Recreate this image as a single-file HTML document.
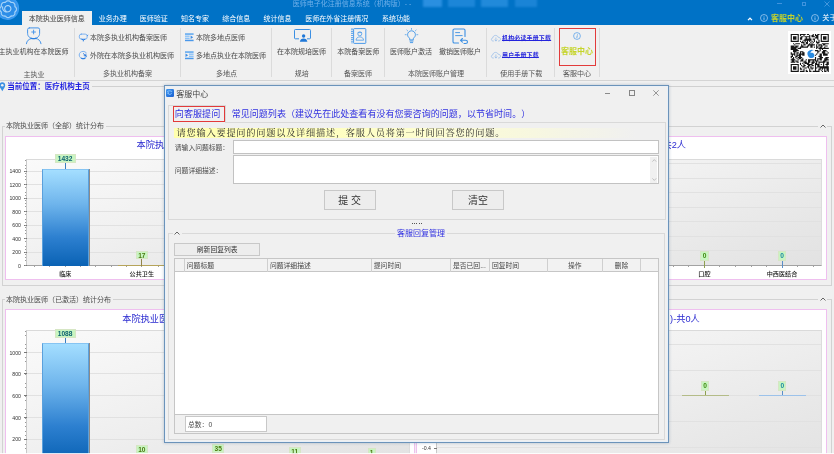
<!DOCTYPE html>
<html lang="zh-CN">
<head>
<meta charset="utf-8">
<title>医师电子化注册信息系统（机构版）</title>
<style>
html,body{margin:0;padding:0}
body{width:834px;height:454px;overflow:hidden;background:#f0f0f0;position:relative;will-change:transform;
 font-family:"Liberation Sans","Noto Sans CJK SC",sans-serif;font-size:7px;color:#4a4a4a}
.a{position:absolute}
.t{position:absolute;white-space:nowrap;line-height:10px;height:10px}
.c{text-align:center}
svg{position:absolute;overflow:visible}
/* header */
#hdr{left:0;top:0;width:834px;height:24.5px;background:#0072c6}
.tab{color:#fff;font-size:7px}
#atab{left:22px;top:10.8px;width:69.7px;height:14px;background:#f0f0f0}
.sep{position:absolute;width:1px;background:#dbdbdb;top:28px;height:48.5px}
.gl{color:#555}
.lnk{color:#2424dc;font-weight:bold;text-decoration:underline;font-size:5.9px;letter-spacing:0.25px;text-underline-offset:0.4px;text-decoration-thickness:0.7px}

.grp{position:absolute;border:1px solid #d2d2d2;box-sizing:border-box}
.gh{position:absolute;background:#f0f0f0;white-space:nowrap;line-height:10px;height:10px;padding:0 1.5px;color:#4a4a4a}
.ch{position:absolute;background:#fff;border:1px solid #efbfef;box-sizing:border-box}
.plot{position:absolute;box-sizing:border-box;border-top:1px solid #dadada;border-left:1px solid #c8c8c8;border-right:1px solid #dcdcdc;border-bottom:1px solid #a2a2a2;background:linear-gradient(160deg,#fafafa 0%,#f1f1f1 40%,#e8e8e8 75%,#e2e2e2 100%)}
.grid{position:absolute;left:0;right:0;height:1px;background:#e1e1e1}
.yl{position:absolute;font-size:5.2px;line-height:6px;height:6px;width:18px;text-align:right;color:#333;font-family:"Liberation Sans",sans-serif}
.xl{position:absolute;font-size:6.1px;line-height:8px;height:8px;width:50px;text-align:center;color:#111;font-weight:500}
.ctitle{position:absolute;white-space:nowrap;font-size:9.2px;line-height:12px;height:12px;color:#2a2ad0}
.dl{position:absolute;box-sizing:border-box;background:#c8f5c1;border:0.7px solid #d6e6c4;font-size:6.6px;line-height:7.4px;text-align:center;font-weight:bold;font-family:"Liberation Sans",sans-serif}
.tick{position:absolute;width:0.8px;height:1.3px;background:#a0a0a0}

#dlg{left:164px;top:84.8px;width:505px;height:358.7px;background:#f0f0f0;border:1px solid #6b93ba;box-sizing:border-box;box-shadow:0 0 3px rgba(40,80,130,.30),inset 0 0 0 1px #e9f0f7}
.pn{position:absolute;border:1px solid #d9d9d9;box-sizing:border-box}
.inp{position:absolute;background:#fff;border:1px solid #c2c2c2;box-sizing:border-box}
.btn{position:absolute;background:#ededed;border:1px solid #c8c8c8;box-sizing:border-box;text-align:center;color:#333;white-space:nowrap}
.th{position:absolute;top:0;height:12.8px;line-height:13.4px;border-left:1px solid #cfcfcf;box-sizing:border-box;padding-left:2px;white-space:nowrap;overflow:hidden;color:#444;font-size:6.8px}
.kai{text-spacing-trim:space-all;font-family:"Liberation Serif","Noto Serif CJK SC",serif}
</style>
</head>
<body>
<!--HEADER-->
<div class="a" id="hdr"></div>
<!-- logo -->
<svg style="left:0;top:0" width="22" height="22" viewBox="0 0 22 22">
 <defs><radialGradient id="lg" cx="50%" cy="50%" r="50%"><stop offset="0" stop-color="#2686e2"/><stop offset="0.75" stop-color="#2f91ea"/><stop offset="1" stop-color="#3d9df2"/></radialGradient></defs>
 <circle cx="7.5" cy="8.3" r="11.6" fill="url(#lg)"/>
 <path d="M16.50 9.20 L16.41 9.93 L16.15 10.62 L15.72 11.24 L15.08 11.74 L14.83 12.34 L14.93 13.14 L14.80 13.89 L14.49 14.56 L14.04 15.14 L13.46 15.59 L12.79 15.90 L12.04 16.03 L11.24 15.93 L10.64 16.18 L10.14 16.82 L9.52 17.25 L8.83 17.51 L8.10 17.60 L7.37 17.51 L6.68 17.25 L6.06 16.82 L5.56 16.18 L4.96 15.93 L4.16 16.03 L3.41 15.90 L2.74 15.59 L2.16 15.14 L1.71 14.56 L1.40 13.89 L1.27 13.14 L1.37 12.34 L1.12 11.74 L0.48 11.24 L0.05 10.62 L-0.21 9.93 L-0.30 9.20 L-0.21 8.47 L0.05 7.78 L0.48 7.16 L1.12 6.66 L1.37 6.06 L1.27 5.26 L1.40 4.51 L1.71 3.84 L2.16 3.26 L2.74 2.81 L3.41 2.50 L4.16 2.37 L4.96 2.47 L5.56 2.22 L6.06 1.58 L6.68 1.15 L7.37 0.89 L8.10 0.80 L8.83 0.89 L9.52 1.15 L10.14 1.58 L10.64 2.22 L11.24 2.47 L12.04 2.37 L12.79 2.50 L13.46 2.81 L14.04 3.26 L14.49 3.84 L14.80 4.51 L14.93 5.26 L14.83 6.06 L15.08 6.66 L15.72 7.16 L16.15 7.78 L16.41 8.47 L16.50 9.20Z" fill="none" stroke="#a4d2f8" stroke-width="1.2" stroke-linejoin="round"/>
 <path d="M6.25 11.38 L5.81 11.07 L5.43 10.69 L5.12 10.25 L4.89 9.76 L4.75 9.24 L4.70 8.70 L4.75 8.16 L4.89 7.64 L5.12 7.15 L5.43 6.71 L5.81 6.33 L6.25 6.02 L6.74 5.79 L7.26 5.65 L7.80 5.60 L8.34 5.65 L8.86 5.79 L9.35 6.02 L9.79 6.33 L10.17 6.71 L10.48 7.15 L10.71 7.64 L10.85 8.16 L10.90 8.70 L10.85 9.24 L10.71 9.76 L10.48 10.25 L10.17 10.69 L9.79 11.07 L9.35 11.38 L8.86 11.61 L8.34 11.75 L7.80 11.80 L7.22 11.97 L6.59 12.02 L5.93 11.95 L5.25 11.74 L4.60 11.39 L3.99 10.90 L3.46 10.28 L3.04 9.54 L2.75 8.70 L2.61 7.79 L2.65 6.82" fill="none" stroke="#b0d9fa" stroke-width="1.1" stroke-linecap="round" stroke-linejoin="round"/>
</svg>
<div class="t" style="left:292.7px;top:-1px;color:#6fb0ea;font-size:7px">医师电子化注册信息系统（机构版）- -</div>
<div class="a" style="left:423px;top:-2px;width:19px;height:9px;background:#2a8fe0;filter:blur(1.2px)"></div>
<div class="a" style="left:448px;top:-2px;width:27px;height:9px;background:#1c86d8;filter:blur(1.2px)"></div>
<div class="a" style="left:481px;top:-2px;width:27px;height:9px;background:#218ada;filter:blur(1.2px)"></div>
<div class="a" style="left:515px;top:-2px;width:22px;height:9px;background:#1a84d6;filter:blur(1.2px)"></div>
<!-- window controls -->
<div class="a" style="left:777px;top:3px;width:5px;height:1px;background:#3f93de"></div>
<div class="a" style="left:801.5px;top:1.5px;width:4px;height:4px;border:0.9px solid #3f93de;box-sizing:border-box"></div>
<svg style="left:824px;top:0.5px" width="6" height="6" viewBox="0 0 6 6"><path d="M0.5 0.5L5.5 5.5M5.5 0.5L0.5 5.5" stroke="#4a9ae0" stroke-width="0.9"/></svg>
<!-- tabs -->
<div class="a" id="atab"></div>
<div class="t" style="left:28.8px;top:13.6px;color:#3a3a3a">本院执业医师信息</div>
<div class="t tab" style="left:98.7px;top:13.6px">业务办理</div>
<div class="t tab" style="left:139.8px;top:13.6px">医师验证</div>
<div class="t tab" style="left:180.9px;top:13.6px">知名专家</div>
<div class="t tab" style="left:222.2px;top:13.6px">综合信息</div>
<div class="t tab" style="left:263.5px;top:13.6px">统计信息</div>
<div class="t tab" style="left:305.3px;top:13.6px">医师在外省注册情况</div>
<div class="t tab" style="left:381.9px;top:13.6px">系统功能</div>
<!-- right header items -->
<svg style="left:747px;top:16.5px" width="6" height="4" viewBox="0 0 6 4"><path d="M1 3.1L3 1.2L5 3.1" fill="none" stroke="#fff" stroke-width="1.25"/></svg>
<svg style="left:759.7px;top:14.2px" width="8" height="8" viewBox="0 0 8 8"><circle cx="4" cy="4" r="3.5" fill="none" stroke="#b8d8f6" stroke-width="0.7"/><path d="M4 3.4V5.9M4 2.1V2.7" stroke="#b8d8f6" stroke-width="0.8"/></svg>
<div class="t" style="left:771px;top:13.6px;color:#c2d22c;font-weight:bold;font-size:8px">客服中心</div>
<svg style="left:810.8px;top:14.2px" width="8" height="8" viewBox="0 0 8 8"><circle cx="4" cy="4" r="3.5" fill="none" stroke="#b8d8f6" stroke-width="0.7"/><path d="M4 3.4V5.9M4 2.1V2.7" stroke="#b8d8f6" stroke-width="0.8"/></svg>
<div class="t" style="left:822.2px;top:13.2px;color:#fff;font-size:7.2px">关于</div>
<!--RIBBON-->
<div class="a" style="left:0;top:79.5px;width:834px;height:1px;background:#d4d4d4"></div>
<div class="sep" style="left:73.8px"></div>
<div class="sep" style="left:179.8px"></div>
<div class="sep" style="left:270.8px"></div>
<div class="sep" style="left:330.8px"></div>
<div class="sep" style="left:384.1px"></div>
<div class="sep" style="left:485.8px"></div>
<div class="sep" style="left:554.3px"></div>
<div class="sep" style="left:598.7px"></div>
<!-- g1 -->
<svg style="left:0;top:0" width="50" height="50" viewBox="0 0 50 50" fill="none" stroke="#3d8fe8" stroke-width="0.95" stroke-linecap="round" stroke-linejoin="round">
 <path d="M29.4 27.9h8.6q1.6 0 1.6 1.6v3.9c0 3-2.5 5.2-6 5.2s-6-2.2-6-5.2v-3.9q0-1.6 1.6-1.6z"/>
 <path d="M33.6 30.1v3.8M31.7 32h3.8" stroke-width="0.9"/>
 <path d="M26.4 43.7c.3-2.9 2.5-4.8 5.3-5.3M41 43.7c-.3-2.9-2.5-4.8-5.3-5.3"/>
 <path d="M31.2 38.3q2.4.8 4.8 0" stroke-width="1.3" stroke="#2a7fe0"/>
</svg>
<div class="t c" style="left:-6.5px;width:80px;top:46.7px">主执业机构在本院医师</div>
<div class="t c gl" style="left:4px;width:60px;top:69.8px">主执业</div>
<!-- g2 -->
<svg style="left:0;top:0" width="100" height="70" viewBox="0 0 100 70" fill="none" stroke="#6aa8f0" stroke-width="0.85" stroke-linejoin="round" stroke-linecap="round">
 <path d="M81.3 34.1h3.9q2 0 2 2v1q0 2-2 2h-3.9q-2 0-2-2v-1q0-2 2-2z"/>
 <path d="M81.6 39.3q1.7 1.3 3.4.1M83.3 40v1" stroke="#2f80e2" stroke-width="1"/>
 <path d="M87.2 35.7l.7-.5" stroke="#3d8ae6"/>
</svg>
<div class="t" style="left:90px;top:33.4px">本院多执业机构备案医师</div>
<svg style="left:0;top:0" width="100" height="70" viewBox="0 0 100 70" fill="none" stroke="#6aa8f0" stroke-width="0.85" stroke-linejoin="round" stroke-linecap="round">
 <path d="M86.3 52.7q-1.2-1.3-3.2-1.3c-2.3 0-3.9 1.6-3.9 3.6s1.6 3.6 3.9 3.6q2.6 0 3.6-2.3"/>
 <path d="M83.3 53.6l2.6 2.3M85.9 55.9l-1.7-.2M85.9 55.9l-.1-1.7" stroke="#2a78dc" stroke-width="0.9"/>
 <path d="M81.4 58.2q1.8.9 3.6 0" stroke="#2f80e2" stroke-width="1.1"/>
</svg>
<div class="t" style="left:90px;top:50.6px">外院在本院多执业机构医师</div>
<div class="t c gl" style="left:87.5px;width:80px;top:69.4px">多执业机构备案</div>
<!-- g3 -->
<svg style="left:185px;top:33px" width="9" height="9" viewBox="0 0 9 9">
 <rect x="0" y="0.3" width="8.6" height="1.5" fill="#5aa6f0"/><rect x="0" y="2.5" width="4.6" height="1.4" fill="#8cc2f8"/><rect x="0" y="4.6" width="4.6" height="1.4" fill="#8cc2f8"/><rect x="0" y="6.7" width="8.6" height="1.5" fill="#4a98ea"/>
 <path d="M5.6 2.4l2.6 1.8-2.6 1.9z" fill="#3c8ce4"/>
</svg>
<div class="t" style="left:196px;top:33.4px">本院多地点医师</div>
<svg style="left:185px;top:50.5px" width="9" height="9" viewBox="0 0 9 9">
 <rect x="0" y="0.3" width="8.6" height="1.5" fill="#5aa6f0"/><rect x="4" y="2.5" width="4.6" height="1.4" fill="#8cc2f8"/><rect x="4" y="4.6" width="4.6" height="1.4" fill="#8cc2f8"/><rect x="0" y="6.7" width="8.6" height="1.5" fill="#4a98ea"/>
 <path d="M0.5 2.4l2.6 1.8-2.6 1.9z" fill="#3c8ce4"/>
</svg>
<div class="t" style="left:196px;top:50.6px">多地点执业在本院医师</div>
<div class="t c gl" style="left:196.5px;width:60px;top:69.4px">多地点</div>
<!-- g4 -->
<svg style="left:293.5px;top:29px" width="17" height="13.5" viewBox="0 0 17 13.5" fill="none" stroke="#3b8fe3" stroke-width="1" stroke-linejoin="round">
 <path d="M5 9.8H1.3c-.5 0-.8-.3-.8-.8V1.3c0-.5.3-.8.8-.8h14.4c.5 0 .8.3.8.8V9c0 .5-.3.8-.8.8H13"/>
 <circle cx="9.6" cy="7" r="1.7" fill="#1f78d8" stroke="none"/>
 <path d="M5.8 12.8c.3-2.3 1.8-3.4 3.8-3.4s3.5 1.1 3.8 3.4z" fill="#1f78d8" stroke="none"/>
</svg>
<div class="t c" style="left:271.5px;width:60px;top:46.6px">在本院规培医师</div>
<div class="t c gl" style="left:271.7px;width:60px;top:69.4px">规培</div>
<!-- g5 -->
<svg style="left:350.5px;top:28px" width="15.5" height="16" viewBox="0 0 15.5 16" fill="none" stroke="#4a9aea" stroke-width="1" stroke-linejoin="round">
 <rect x="2.6" y="0.6" width="12.2" height="14.8" rx="0.6"/>
 <path d="M1 0.6v14.8" stroke-width="1.6" stroke-dasharray="1.2 0.9"/>
 <circle cx="8.8" cy="5.8" r="2" stroke-width="0.8"/>
 <path d="M5 12.2c.3-2.2 1.7-3.3 3.8-3.3s3.5 1.1 3.8 3.3z" stroke-width="0.8"/>
 <path d="M6.7 4.6h4.2" stroke-width="0.7"/>
</svg>
<div class="t c" style="left:328.2px;width:60px;top:46.6px">本院备案医师</div>
<div class="t c gl" style="left:328px;width:60px;top:69.4px">备案医师</div>
<!-- g6 -->
<svg style="left:403.5px;top:27.8px" width="15" height="16" viewBox="0 0 15 16" fill="none" stroke="#3b93e8" stroke-width="0.9" stroke-linecap="round" stroke-linejoin="round">
 <path d="M5.7 11.5V10.3C4.4 9.5 3.6 8.2 3.6 6.7 3.6 4.5 5.3 2.8 7.5 2.8s3.9 1.7 3.9 3.9c0 1.5-.8 2.8-2.1 3.6v1.2z"/>
 <path d="M5.9 13h3.2M6.3 14.6h2.4" />
 <path d="M7.5 0.4v1M1.2 6.7h1M12.8 6.7h1M2.9 2.1l.7.7M12.1 2.1l-.7.7" stroke-width="0.7"/>
</svg>
<div class="t c" style="left:381px;width:60px;top:46.6px">医师账户激活</div>
<svg style="left:451.5px;top:27.8px" width="16" height="16" viewBox="0 0 16 16" fill="none" stroke="#3b8fe3" stroke-width="1.1" stroke-linecap="round" stroke-linejoin="round">
 <path d="M6.5 15H2.3c-.8 0-1.3-.5-1.3-1.3V2.3C1 1.5 1.5 1 2.3 1h9.4c.8 0 1.3.5 1.3 1.3v6.2"/>
 <path d="M3.6 4.6h4M3.6 7.6h6.6" stroke-width="0.9"/>
 <path d="M8.6 12.3h5c1.1 0 1.9.7 1.9 1.6S14.7 15.5 13.6 15.5H12M10.4 10.5l-1.9 1.8 1.9 1.8"/>
</svg>
<div class="t c" style="left:430px;width:60px;top:46.6px">撤销医师账户</div>
<div class="t c gl" style="left:396px;width:80px;top:69.4px">本院医师账户管理</div>
<!-- g7 -->
<svg style="left:490.5px;top:34.5px" width="10" height="6.5" viewBox="0 0 10 6.5" fill="none" stroke="#8fb8e8" stroke-width="0.7" stroke-linejoin="round" stroke-linecap="round">
 <path d="M2.4 6h-.2C1.1 6 .4 5.3 .4 4.4c0-.8.6-1.5 1.4-1.6C2 1.4 3.1.4 4.5.4c1.2 0 2.2.7 2.6 1.8 1.3 0 2.4.8 2.4 2 0 1-.8 1.8-1.9 1.8h-.2"/>
 <path d="M4.9 2.9v3M3.8 4.9l1.1 1.1 1.1-1.1"/>
</svg>
<div class="t lnk" style="left:502px;top:32.7px">机构必读手册下载</div>
<svg style="left:490.5px;top:51.7px" width="10" height="6.5" viewBox="0 0 10 6.5" fill="none" stroke="#8fb8e8" stroke-width="0.7" stroke-linejoin="round" stroke-linecap="round">
 <path d="M2.4 6h-.2C1.1 6 .4 5.3 .4 4.4c0-.8.6-1.5 1.4-1.6C2 1.4 3.1.4 4.5.4c1.2 0 2.2.7 2.6 1.8 1.3 0 2.4.8 2.4 2 0 1-.8 1.8-1.9 1.8h-.2"/>
 <path d="M4.9 2.9v3M3.8 4.9l1.1 1.1 1.1-1.1"/>
</svg>
<div class="t lnk" style="left:502px;top:50px">用户手册下载</div>
<div class="t c gl" style="left:491.3px;width:60px;top:69.4px">使用手册下载</div>
<!-- g8 -->
<div class="a" style="left:559.4px;top:28px;width:36.4px;height:37.7px;border:1.3px solid #e23b3b;box-sizing:border-box"></div>
<svg style="left:573px;top:31.5px" width="8" height="8" viewBox="0 0 8 8"><circle cx="4" cy="4" r="3.4" fill="none" stroke="#4a9aea" stroke-width="0.7"/><path d="M4.3 3.3L3.8 5.9M4.5 2v.6" stroke="#4a9aea" stroke-width="0.8"/></svg>
<div class="t c" style="left:547px;width:60px;top:46.6px;color:#c5d42a;font-weight:bold;font-size:8px">客服中心</div>
<div class="t c gl" style="left:547px;width:60px;top:69.4px">客服中心</div>
<!-- QR -->
<div class="a" id="qr" style="left:788px;top:30.5px;width:43px;height:43.5px;background:#fff"></div>
<svg style="left:788px;top:30.5px" width="43" height="43.5" viewBox="0 0 43 43.5"><path d="M2.70 2.90h8.08v1.15h-8.08zM11.94 2.90h5.77v1.15h-5.77zM18.86 2.90h2.31v1.15h-2.31zM24.64 2.90h1.15v1.15h-1.15zM26.95 2.90h1.15v1.15h-1.15zM29.25 2.90h2.31v1.15h-2.31zM32.72 2.90h8.08v1.15h-8.08zM2.70 4.05h1.15v1.15h-1.15zM9.63 4.05h1.15v1.15h-1.15zM11.94 4.05h1.15v1.15h-1.15zM15.40 4.05h1.15v1.15h-1.15zM21.17 4.05h1.15v1.15h-1.15zM23.48 4.05h2.31v1.15h-2.31zM26.95 4.05h3.46v1.15h-3.46zM32.72 4.05h1.15v1.15h-1.15zM39.65 4.05h1.15v1.15h-1.15zM2.70 5.21h1.15v1.15h-1.15zM5.01 5.21h3.46v1.15h-3.46zM9.63 5.21h1.15v1.15h-1.15zM13.09 5.21h2.31v1.15h-2.31zM16.55 5.21h5.77v1.15h-5.77zM23.48 5.21h3.46v1.15h-3.46zM28.10 5.21h2.31v1.15h-2.31zM32.72 5.21h1.15v1.15h-1.15zM35.03 5.21h3.46v1.15h-3.46zM39.65 5.21h1.15v1.15h-1.15zM2.70 6.36h1.15v1.15h-1.15zM5.01 6.36h3.46v1.15h-3.46zM9.63 6.36h1.15v1.15h-1.15zM11.94 6.36h2.31v1.15h-2.31zM17.71 6.36h1.15v1.15h-1.15zM21.17 6.36h1.15v1.15h-1.15zM26.95 6.36h3.46v1.15h-3.46zM32.72 6.36h1.15v1.15h-1.15zM35.03 6.36h3.46v1.15h-3.46zM39.65 6.36h1.15v1.15h-1.15zM2.70 7.52h1.15v1.15h-1.15zM5.01 7.52h3.46v1.15h-3.46zM9.63 7.52h1.15v1.15h-1.15zM11.94 7.52h2.31v1.15h-2.31zM16.55 7.52h6.93v1.15h-6.93zM24.64 7.52h2.31v1.15h-2.31zM29.25 7.52h1.15v1.15h-1.15zM32.72 7.52h1.15v1.15h-1.15zM35.03 7.52h3.46v1.15h-3.46zM39.65 7.52h1.15v1.15h-1.15zM2.70 8.67h1.15v1.15h-1.15zM9.63 8.67h1.15v1.15h-1.15zM15.40 8.67h8.08v1.15h-8.08zM25.79 8.67h1.15v1.15h-1.15zM30.41 8.67h1.15v1.15h-1.15zM32.72 8.67h1.15v1.15h-1.15zM39.65 8.67h1.15v1.15h-1.15zM2.70 9.83h8.08v1.15h-8.08zM11.94 9.83h1.15v1.15h-1.15zM14.25 9.83h1.15v1.15h-1.15zM16.55 9.83h1.15v1.15h-1.15zM18.86 9.83h1.15v1.15h-1.15zM21.17 9.83h1.15v1.15h-1.15zM23.48 9.83h1.15v1.15h-1.15zM25.79 9.83h1.15v1.15h-1.15zM28.10 9.83h1.15v1.15h-1.15zM30.41 9.83h1.15v1.15h-1.15zM32.72 9.83h8.08v1.15h-8.08zM13.09 10.98h3.46v1.15h-3.46zM17.71 10.98h2.31v1.15h-2.31zM22.33 10.98h1.15v1.15h-1.15zM24.64 10.98h1.15v1.15h-1.15zM28.10 10.98h3.46v1.15h-3.46zM5.01 12.14h1.15v1.15h-1.15zM7.32 12.14h4.62v1.15h-4.62zM15.40 12.14h1.15v1.15h-1.15zM17.71 12.14h2.31v1.15h-2.31zM21.17 12.14h1.15v1.15h-1.15zM23.48 12.14h1.15v1.15h-1.15zM29.25 12.14h1.15v1.15h-1.15zM33.87 12.14h6.93v1.15h-6.93zM6.16 13.29h1.15v1.15h-1.15zM13.09 13.29h1.15v1.15h-1.15zM15.40 13.29h2.31v1.15h-2.31zM20.02 13.29h6.93v1.15h-6.93zM28.10 13.29h1.15v1.15h-1.15zM30.41 13.29h3.46v1.15h-3.46zM35.03 13.29h2.31v1.15h-2.31zM2.70 14.45h3.46v1.15h-3.46zM7.32 14.45h3.46v1.15h-3.46zM13.09 14.45h2.31v1.15h-2.31zM18.86 14.45h2.31v1.15h-2.31zM22.33 14.45h2.31v1.15h-2.31zM28.10 14.45h1.15v1.15h-1.15zM30.41 14.45h1.15v1.15h-1.15zM32.72 14.45h2.31v1.15h-2.31zM37.34 14.45h2.31v1.15h-2.31zM2.70 15.60h6.93v1.15h-6.93zM11.94 15.60h8.08v1.15h-8.08zM22.33 15.60h2.31v1.15h-2.31zM25.79 15.60h1.15v1.15h-1.15zM28.10 15.60h2.31v1.15h-2.31zM31.56 15.60h2.31v1.15h-2.31zM36.18 15.60h1.15v1.15h-1.15zM2.70 16.75h5.77v1.15h-5.77zM9.63 16.75h3.46v1.15h-3.46zM28.10 16.75h1.15v1.15h-1.15zM30.41 16.75h10.39v1.15h-10.39zM2.70 17.91h6.93v1.15h-6.93zM31.56 17.91h1.15v1.15h-1.15zM33.87 17.91h1.15v1.15h-1.15zM5.01 19.06h5.77v1.15h-5.77zM26.95 19.06h3.46v1.15h-3.46zM31.56 19.06h1.15v1.15h-1.15zM35.03 19.06h3.46v1.15h-3.46zM5.01 20.22h3.46v1.15h-3.46zM11.94 20.22h3.46v1.15h-3.46zM29.25 20.22h2.31v1.15h-2.31zM33.87 20.22h3.46v1.15h-3.46zM38.49 20.22h1.15v1.15h-1.15zM2.70 21.37h1.15v1.15h-1.15zM6.16 21.37h1.15v1.15h-1.15zM8.47 21.37h2.31v1.15h-2.31zM11.94 21.37h1.15v1.15h-1.15zM14.25 21.37h2.31v1.15h-2.31zM29.25 21.37h1.15v1.15h-1.15zM33.87 21.37h3.46v1.15h-3.46zM39.65 21.37h1.15v1.15h-1.15zM2.70 22.53h4.62v1.15h-4.62zM8.47 22.53h1.15v1.15h-1.15zM10.78 22.53h5.77v1.15h-5.77zM28.10 22.53h1.15v1.15h-1.15zM31.56 22.53h2.31v1.15h-2.31zM35.03 22.53h4.62v1.15h-4.62zM3.85 23.68h1.15v1.15h-1.15zM6.16 23.68h1.15v1.15h-1.15zM8.47 23.68h4.62v1.15h-4.62zM14.25 23.68h2.31v1.15h-2.31zM26.95 23.68h1.15v1.15h-1.15zM31.56 23.68h2.31v1.15h-2.31zM35.03 23.68h4.62v1.15h-4.62zM2.70 24.84h2.31v1.15h-2.31zM7.32 24.84h2.31v1.15h-2.31zM10.78 24.84h2.31v1.15h-2.31zM30.41 24.84h3.46v1.15h-3.46zM2.70 25.99h1.15v1.15h-1.15zM5.01 25.99h1.15v1.15h-1.15zM7.32 25.99h1.15v1.15h-1.15zM9.63 25.99h4.62v1.15h-4.62zM26.95 25.99h1.15v1.15h-1.15zM31.56 25.99h3.46v1.15h-3.46zM37.34 25.99h3.46v1.15h-3.46zM3.85 27.15h2.31v1.15h-2.31zM8.47 27.15h1.15v1.15h-1.15zM10.78 27.15h2.31v1.15h-2.31zM14.25 27.15h1.15v1.15h-1.15zM26.95 27.15h1.15v1.15h-1.15zM29.25 27.15h4.62v1.15h-4.62zM36.18 27.15h3.46v1.15h-3.46zM2.70 28.30h4.62v1.15h-4.62zM9.63 28.30h1.15v1.15h-1.15zM13.09 28.30h2.31v1.15h-2.31zM17.71 28.30h1.15v1.15h-1.15zM20.02 28.30h8.08v1.15h-8.08zM29.25 28.30h1.15v1.15h-1.15zM31.56 28.30h2.31v1.15h-2.31zM36.18 28.30h4.62v1.15h-4.62zM3.85 29.45h2.31v1.15h-2.31zM7.32 29.45h2.31v1.15h-2.31zM11.94 29.45h3.46v1.15h-3.46zM16.55 29.45h1.15v1.15h-1.15zM20.02 29.45h2.31v1.15h-2.31zM24.64 29.45h1.15v1.15h-1.15zM26.95 29.45h3.46v1.15h-3.46zM35.03 29.45h3.46v1.15h-3.46zM2.70 30.61h4.62v1.15h-4.62zM8.47 30.61h2.31v1.15h-2.31zM15.40 30.61h3.46v1.15h-3.46zM20.02 30.61h2.31v1.15h-2.31zM23.48 30.61h3.46v1.15h-3.46zM28.10 30.61h1.15v1.15h-1.15zM30.41 30.61h6.93v1.15h-6.93zM38.49 30.61h2.31v1.15h-2.31zM11.94 31.76h1.15v1.15h-1.15zM14.25 31.76h1.15v1.15h-1.15zM16.55 31.76h4.62v1.15h-4.62zM23.48 31.76h2.31v1.15h-2.31zM26.95 31.76h2.31v1.15h-2.31zM30.41 31.76h1.15v1.15h-1.15zM35.03 31.76h1.15v1.15h-1.15zM38.49 31.76h2.31v1.15h-2.31zM2.70 32.92h8.08v1.15h-8.08zM11.94 32.92h1.15v1.15h-1.15zM15.40 32.92h1.15v1.15h-1.15zM18.86 32.92h5.77v1.15h-5.77zM26.95 32.92h4.62v1.15h-4.62zM32.72 32.92h1.15v1.15h-1.15zM35.03 32.92h1.15v1.15h-1.15zM37.34 32.92h3.46v1.15h-3.46zM2.70 34.07h1.15v1.15h-1.15zM9.63 34.07h1.15v1.15h-1.15zM13.09 34.07h1.15v1.15h-1.15zM15.40 34.07h2.31v1.15h-2.31zM20.02 34.07h2.31v1.15h-2.31zM23.48 34.07h2.31v1.15h-2.31zM26.95 34.07h1.15v1.15h-1.15zM29.25 34.07h2.31v1.15h-2.31zM35.03 34.07h1.15v1.15h-1.15zM38.49 34.07h1.15v1.15h-1.15zM2.70 35.23h1.15v1.15h-1.15zM5.01 35.23h3.46v1.15h-3.46zM9.63 35.23h1.15v1.15h-1.15zM14.25 35.23h2.31v1.15h-2.31zM18.86 35.23h2.31v1.15h-2.31zM22.33 35.23h1.15v1.15h-1.15zM26.95 35.23h1.15v1.15h-1.15zM29.25 35.23h11.55v1.15h-11.55zM2.70 36.38h1.15v1.15h-1.15zM5.01 36.38h3.46v1.15h-3.46zM9.63 36.38h1.15v1.15h-1.15zM11.94 36.38h1.15v1.15h-1.15zM16.55 36.38h2.31v1.15h-2.31zM20.02 36.38h1.15v1.15h-1.15zM22.33 36.38h3.46v1.15h-3.46zM26.95 36.38h2.31v1.15h-2.31zM31.56 36.38h9.24v1.15h-9.24zM2.70 37.54h1.15v1.15h-1.15zM5.01 37.54h3.46v1.15h-3.46zM9.63 37.54h1.15v1.15h-1.15zM11.94 37.54h2.31v1.15h-2.31zM15.40 37.54h1.15v1.15h-1.15zM21.17 37.54h1.15v1.15h-1.15zM23.48 37.54h1.15v1.15h-1.15zM26.95 37.54h1.15v1.15h-1.15zM30.41 37.54h2.31v1.15h-2.31zM33.87 37.54h1.15v1.15h-1.15zM36.18 37.54h1.15v1.15h-1.15zM38.49 37.54h2.31v1.15h-2.31zM2.70 38.69h1.15v1.15h-1.15zM9.63 38.69h1.15v1.15h-1.15zM15.40 38.69h1.15v1.15h-1.15zM17.71 38.69h1.15v1.15h-1.15zM21.17 38.69h1.15v1.15h-1.15zM26.95 38.69h1.15v1.15h-1.15zM30.41 38.69h1.15v1.15h-1.15zM32.72 38.69h1.15v1.15h-1.15zM36.18 38.69h1.15v1.15h-1.15zM38.49 38.69h2.31v1.15h-2.31zM2.70 39.85h8.08v1.15h-8.08zM11.94 39.85h4.62v1.15h-4.62zM17.71 39.85h2.31v1.15h-2.31zM21.17 39.85h2.31v1.15h-2.31zM24.64 39.85h6.93v1.15h-6.93zM33.87 39.85h1.15v1.15h-1.15zM36.18 39.85h2.31v1.15h-2.31zM39.65 39.85h1.15v1.15h-1.15z" fill="#161616"/><path d="M19.5 21.5c1.500-2.800 4.500-3.200 6.500-2.200-2 .2-3.200 1.200-3.700 2.600 1.700-.6 3.400 0 4 1.600.6 1.800-.7 3.400-2.500 3.600-2.600.3-4.800-2.400-4.300-5.600z" fill="#2a8be0"/></svg>
<!--MAIN-->
<svg style="left:-0.9px;top:81.5px" width="6.8" height="9.4" viewBox="0 0 6 8.6"><path d="M2.9 0.3C1.3 0.3 0.2 1.5 0.2 3c0 1.8 1.8 3.6 2.7 5.4.9-1.8 2.7-3.6 2.7-5.4C5.6 1.5 4.5 0.3 2.9 0.3z" fill="#3b8fe3"/><circle cx="2.9" cy="3" r="1.2" fill="#f0f0f0"/></svg>
<div class="t" style="left:7.3px;top:81.9px;color:#1d1de0;font-weight:bold;font-size:7.5px">当前位置：医疗机构主页</div>
<div class="a" style="left:92px;top:86px;width:742px;height:1px;background:#d0d0d0"></div>
<div class="grp" style="left:1.5px;top:125.5px;width:830.5px;height:160.5px"></div>
<div class="gh" style="left:4.5px;top:121.2px">本院执业医师（全部）统计分布</div>
<div class="a" style="left:818px;top:120px;width:9px;height:10px;background:#f0f0f0"></div><svg style="left:820px;top:123.5px" width="6" height="4" viewBox="0 0 6 4"><path d="M0.5 3.5L3 1L5.5 3.5" fill="none" stroke="#555" stroke-width="0.9"/></svg>
<div class="ch" style="left:5.2px;top:135.5px;width:410px;height:144.5px"></div>
<div class="ch" style="left:415.5px;top:135.5px;width:411.3px;height:144.5px"></div>
<div class="ctitle" style="left:136.6px;top:139px">本院执业医师（全部）统计分布</div>
<div class="ctitle" style="right:148px;top:139px">共2人</div>
<div class="plot" style="left:26px;top:159px;width:384px;height:107.3px"><div class="grid" style="top:10.7px"></div><div class="grid" style="top:24.2px"></div><div class="grid" style="top:37.7px"></div><div class="grid" style="top:51.2px"></div><div class="grid" style="top:64.7px"></div><div class="grid" style="top:78.2px"></div><div class="grid" style="top:91.7px"></div></div>
<div class="yl" style="left:3px;top:262.5px">0</div><div class="a" style="left:23.5px;top:265.2px;width:3px;height:1px;background:#777"></div><div class="yl" style="left:3px;top:249.0px">200</div><div class="a" style="left:23.5px;top:251.7px;width:3px;height:1px;background:#777"></div><div class="yl" style="left:3px;top:235.5px">400</div><div class="a" style="left:23.5px;top:238.2px;width:3px;height:1px;background:#777"></div><div class="yl" style="left:3px;top:222.0px">600</div><div class="a" style="left:23.5px;top:224.7px;width:3px;height:1px;background:#777"></div><div class="yl" style="left:3px;top:208.5px">800</div><div class="a" style="left:23.5px;top:211.2px;width:3px;height:1px;background:#777"></div><div class="yl" style="left:3px;top:195.0px">1000</div><div class="a" style="left:23.5px;top:197.7px;width:3px;height:1px;background:#777"></div><div class="yl" style="left:3px;top:181.5px">1200</div><div class="a" style="left:23.5px;top:184.2px;width:3px;height:1px;background:#777"></div><div class="yl" style="left:3px;top:168.0px">1400</div><div class="a" style="left:23.5px;top:170.7px;width:3px;height:1px;background:#777"></div>
<div class="a" style="left:24.8px;top:160px;width:1.5px;height:105.5px;background:repeating-linear-gradient(to bottom,#999 0,#999 0.7px,transparent 0.7px,transparent 2.7px)"></div>
<div class="a" style="left:43px;top:169px;width:47.3px;height:96.7px;background:#8a8a8a"></div>
<div class="a" style="left:42px;top:168.5px;width:46.8px;height:97.2px;box-sizing:border-box;border:0.5px solid #5aa0dc;border-top-color:#86c4f2;border-bottom:none;background:linear-gradient(to bottom,#a4deff 0%,#6fb5ec 35%,#2d80d0 70%,#0a62b4 100%)"></div>
<div class="a" style="left:64.8px;top:163px;width:1px;height:6px;background:#3b7fc0"></div>
<div class="dl" style="left:54.5px;top:154.3px;width:21.2px;height:9.2px;color:#0d6270">1432</div>
<div class="a" style="left:118px;top:264.6px;width:47px;height:1.2px;background:#b6a45a"></div>
<div class="a" style="left:141.3px;top:259px;width:0.8px;height:8px;background:#94864a"></div>
<div class="dl" style="left:136px;top:250.6px;width:11.6px;height:8.8px;color:#4a7a10">17</div>
<div class="tick" style="left:33.9px;top:266px"></div><div class="tick" style="left:49.2px;top:266px"></div><div class="tick" style="left:64.8px;top:266px"></div><div class="tick" style="left:80.3px;top:266px"></div><div class="tick" style="left:95.0px;top:266px"></div><div class="tick" style="left:111.2px;top:266px"></div><div class="tick" style="left:126.0px;top:266px"></div><div class="tick" style="left:141.3px;top:266px"></div><div class="tick" style="left:158.0px;top:266px"></div>
<div class="xl" style="left:40.3px;top:269.8px">临床</div><div class="xl" style="left:116.8px;top:269.8px">公共卫生</div>
<div class="plot" style="left:436px;top:159px;width:385.8px;height:107.3px"><div class="grid" style="top:3.4px"></div><div class="grid" style="top:17.9px"></div><div class="grid" style="top:32.4px"></div><div class="grid" style="top:46.9px"></div><div class="grid" style="top:61.4px"></div><div class="grid" style="top:75.9px"></div><div class="grid" style="top:90.4px"></div></div>
<div class="tick" style="left:672.9px;top:266px"></div><div class="tick" style="left:688.4px;top:266px"></div><div class="tick" style="left:703.9px;top:266px"></div><div class="tick" style="left:719.4px;top:266px"></div><div class="tick" style="left:734.9px;top:266px"></div><div class="tick" style="left:719.4px;top:266px"></div><div class="tick" style="left:734.9px;top:266px"></div><div class="tick" style="left:750.5px;top:266px"></div><div class="tick" style="left:766.0px;top:266px"></div><div class="tick" style="left:781.5px;top:266px"></div><div class="tick" style="left:797.0px;top:266px"></div><div class="tick" style="left:812.5px;top:266px"></div>
<div class="a" style="left:704px;top:260px;width:0.8px;height:8px;background:#8ea050"></div><div class="dl" style="left:700.4px;top:251.2px;width:8.2px;height:9.6px;line-height:8.6px;color:#3f8a10">0</div>
<div class="a" style="left:781.6px;top:260px;width:0.8px;height:8px;background:#5a8fc8"></div><div class="dl" style="left:777.9px;top:251.2px;width:8.2px;height:9.6px;line-height:8.6px;color:#1a8aa0">0</div>
<div class="xl" style="left:679.4px;top:269.8px">口腔</div><div class="xl" style="left:757px;top:269.8px">中西医结合</div>
<div class="grp" style="left:1.5px;top:298.5px;width:830.5px;height:171px"></div>
<div class="gh" style="left:4.5px;top:295px">本院执业医师（已激活）统计分布</div>
<div class="a" style="left:818px;top:293px;width:9px;height:10px;background:#f0f0f0"></div><svg style="left:820px;top:296.5px" width="6" height="4" viewBox="0 0 6 4"><path d="M0.5 3.5L3 1L5.5 3.5" fill="none" stroke="#555" stroke-width="0.9"/></svg>
<div class="ch" style="left:5.2px;top:309px;width:410px;height:161px"></div>
<div class="ch" style="left:415.5px;top:309px;width:411.3px;height:161px"></div>
<div class="ctitle" style="left:122.3px;top:313px">本院执业医师（已激活）统计分布</div>
<div class="ctitle" style="right:134.3px;top:313px">)-共0人</div>
<div class="plot" style="left:26px;top:330px;width:384px;height:140px"><div class="grid" style="top:20.7px"></div><div class="grid" style="top:42.4px"></div><div class="grid" style="top:64.1px"></div><div class="grid" style="top:85.8px"></div><div class="grid" style="top:107.5px"></div></div>
<div class="yl" style="left:3px;top:349.5px">1000</div><div class="a" style="left:23.5px;top:351.7px;width:3px;height:1px;background:#777"></div><div class="yl" style="left:3px;top:371.2px">800</div><div class="a" style="left:23.5px;top:373.4px;width:3px;height:1px;background:#777"></div><div class="yl" style="left:3px;top:392.9px">600</div><div class="a" style="left:23.5px;top:395.1px;width:3px;height:1px;background:#777"></div><div class="yl" style="left:3px;top:414.6px">400</div><div class="a" style="left:23.5px;top:416.8px;width:3px;height:1px;background:#777"></div><div class="yl" style="left:3px;top:436.3px">200</div><div class="a" style="left:23.5px;top:438.5px;width:3px;height:1px;background:#777"></div>
<div class="a" style="left:24.8px;top:331px;width:1.5px;height:124px;background:repeating-linear-gradient(to bottom,#999 0,#999 0.7px,transparent 0.7px,transparent 4.340px)"></div>
<div class="a" style="left:43px;top:343.3px;width:47.3px;height:120px;background:#8a8a8a"></div>
<div class="a" style="left:42.2px;top:342.8px;width:46.6px;height:118px;box-sizing:border-box;border:0.5px solid #5aa0dc;border-top-color:#86c4f2;border-bottom:none;background:linear-gradient(to bottom,#a4deff 0%,#6fb5ec 35%,#2d80d0 70%,#0a62b4 100%)"></div>
<div class="a" style="left:64.8px;top:337px;width:1px;height:6px;background:#3b7fc0"></div>
<div class="dl" style="left:54.5px;top:328.5px;width:21.2px;height:9.2px;color:#0d6270">1088</div>
<div class="dl" style="left:136px;top:445.4px;width:11.6px;height:8.8px;color:#4a7a10">10</div>
<div class="dl" style="left:212.4px;top:444.3px;width:11.6px;height:8.8px;color:#4a7a10">35</div>
<div class="dl" style="left:289px;top:446.6px;width:11.6px;height:8.8px;color:#4a7a10">11</div>
<div class="dl" style="left:367.5px;top:447.5px;width:8.2px;height:9.6px;line-height:8.6px;color:#4a7a10">1</div>
<div class="plot" style="left:436px;top:330px;width:385.8px;height:140px"><div class="grid" style="top:12.8px"></div><div class="grid" style="top:38.5px"></div><div class="grid" style="top:63.5px"></div><div class="grid" style="top:89.5px"></div><div class="grid" style="top:115.5px"></div></div>
<div class="yl" style="left:413px;top:445.3px">-0.4</div><div class="a" style="left:433.5px;top:447.8px;width:3px;height:1px;background:#777"></div>
<div class="a" style="left:681.6px;top:394.5px;width:47px;height:1px;background:#b4bc88"></div><div class="a" style="left:704.7px;top:390px;width:0.8px;height:5px;background:#8ea050"></div><div class="dl" style="left:700.9px;top:381.4px;width:8.2px;height:9.6px;line-height:8.6px;color:#3f8a10">0</div>
<div class="a" style="left:758.6px;top:394.5px;width:47.6px;height:1px;background:#9cc2ea"></div><div class="a" style="left:782px;top:390px;width:0.8px;height:5px;background:#5a8fc8"></div><div class="dl" style="left:778.2px;top:381.4px;width:8.2px;height:9.6px;line-height:8.6px;color:#1a8aa0">0</div>
<div class="a" style="left:0;top:453.2px;width:834px;height:0.8px;background:rgba(255,255,255,.85)"></div>
<!--DIALOG-->
<div class="a" id="dlg"></div>
<svg style="left:166.2px;top:89.2px" width="8" height="8" viewBox="0 0 8 8"><defs><linearGradient id="ig" x1="0" y1="0" x2="1" y2="1"><stop offset="0" stop-color="#3e98f2"/><stop offset="1" stop-color="#1a5fd0"/></linearGradient></defs><rect x="0" y="0" width="8" height="8" rx="1.2" fill="url(#ig)"/><path d="M1.6 2.4c1.2-.9 3-.7 4.2 0M2 4.6c.6 1.2 2.6 1.3 3.6-.2M2.2 3.2v1.4" fill="none" stroke="#9bd0ff" stroke-width="0.8" stroke-linecap="round"/></svg>
<div class="t" style="left:176.2px;top:90px;font-size:8px;color:#444">客服中心</div>
<div class="a" style="left:604.8px;top:93.2px;width:5.6px;height:1px;background:#8a8a8a"></div>
<div class="a" style="left:629.2px;top:90.2px;width:5.6px;height:5.6px;border:0.9px solid #858585;box-sizing:border-box"></div>
<svg style="left:653.4px;top:90.1px" width="6" height="6" viewBox="0 0 6 6"><path d="M0.3 0.3L5.7 5.7M5.7 0.3L0.3 5.7" stroke="#808080" stroke-width="0.8"/></svg>
<div class="pn" style="left:168px;top:122px;width:497.5px;height:98.2px"></div>
<div class="a" style="left:168px;top:104.9px;width:58px;height:18.1px;background:#f0f0f0;border:1px solid #d9d9d9;border-bottom:none;box-sizing:border-box"></div>
<div class="a" style="left:172.5px;top:106px;width:52px;height:15.7px;border:1.6px solid #e23a3a;box-sizing:border-box"></div>
<div class="t" style="left:174.8px;top:107.5px;line-height:12px;height:12px;font-size:9.1px;color:#3030e0">向客服提问</div>
<div class="t" style="left:231.7px;top:107.5px;line-height:12px;height:12px;font-size:9.05px;color:#3030e0;text-spacing-trim:space-all">常见问题列表（建议先在此处查看有没有您要咨询的问题，以节省时间。）</div>
<div class="a" style="left:174.3px;top:127.8px;width:462px;height:9.8px;background:linear-gradient(to right,#ffffae 0%,#ffffbe 30%,#fdfdd0 55%,#f7f7e0 78%,#f0f0f0 100%)"></div>
<div class="t kai" style="left:176.6px;top:127.1px;line-height:12px;height:12px;font-size:9.2px;letter-spacing:0.77px;color:#2a2a2a;font-weight:400">请您输入要提问的问题以及详细描述，客服人员将第一时间回答您的问题。</div>
<div class="t" style="left:174.8px;top:142.8px;font-size:6.8px">请输入问题标题：</div>
<div class="inp" style="left:232.9px;top:140px;width:426px;height:13.9px"></div>
<div class="t" style="left:174.8px;top:165.8px;font-size:6.8px">问题详细描述：</div>
<div class="inp" style="left:232.9px;top:155.4px;width:426px;height:28.9px"></div>
<div class="a" style="left:650px;top:156.9px;width:7.4px;height:25.9px;background:#f0f0f0"></div>
<svg style="left:651.5px;top:159px" width="4.6" height="3" viewBox="0 0 4.6 3"><path d="M0.4 2.6L2.3 0.6L4.2 2.6" fill="none" stroke="#aaa" stroke-width="0.7"/></svg>
<svg style="left:651.5px;top:177.8px" width="4.6" height="3" viewBox="0 0 4.6 3"><path d="M0.4 0.4L2.3 2.4L4.2 0.4" fill="none" stroke="#aaa" stroke-width="0.7"/></svg>
<div class="btn" style="left:323.8px;top:189.5px;width:51.8px;height:20.7px;line-height:20.2px;font-size:10px">提 交</div>
<div class="btn" style="left:452.2px;top:189.5px;width:51.8px;height:20.7px;line-height:20.2px;font-size:10px">清空</div>
<div class="a" style="left:412px;top:222.9px;width:9.8px;height:1px;background:repeating-linear-gradient(to right,#555 0,#555 1px,transparent 1px,transparent 2.2px)"></div>
<div class="pn" style="left:168.3px;top:232.7px;width:497px;height:207px"></div>
<div class="a" style="left:173px;top:228px;width:9px;height:10px;background:#f0f0f0"></div>
<svg style="left:174.3px;top:230.8px" width="6" height="4" viewBox="0 0 6 4"><path d="M0.5 3.5L3 1L5.5 3.5" fill="none" stroke="#555" stroke-width="0.9"/></svg>
<div class="t" style="left:395px;top:229.1px;height:9px;font-size:8px;color:#3030e0;background:#f0f0f0;padding:0 2px">客服回复管理</div>
<div class="btn" style="left:174.1px;top:242.8px;width:86.2px;height:13.5px;line-height:11px;font-size:6.8px">刷新回复列表</div>
<div class="a" style="left:174.3px;top:258px;width:484.5px;height:176px;border:1px solid #c6c6c6;box-sizing:border-box;background:#fff"></div>
<div class="a" style="left:175.3px;top:259px;width:482.5px;height:12.8px;background:#f2f2f2;border-bottom:1px solid #c6c6c6;box-sizing:border-box">
 <div class="th" style="left:8.5px;width:83.2px">问题标题</div>
 <div class="th" style="left:91.7px;width:103.8px">问题详细描述</div>
 <div class="th" style="left:195.5px;width:79.2px">提问时间</div>
 <div class="th" style="left:274.7px;width:39px">是否已回...</div>
 <div class="th" style="left:313.7px;width:57.7px">回复时间</div>
 <div class="th" style="left:371.4px;width:55.1px;text-align:center;padding:0">操作</div>
 <div class="th" style="left:426.5px;width:38.4px;text-align:center;padding:0">删除</div>
 <div class="th" style="left:464.9px;width:10px"></div>
</div>
<div class="a" style="left:175.3px;top:413.7px;width:482.5px;height:19.3px;background:#f0f0f0;border-top:1px solid #c6c6c6;box-sizing:border-box"></div>
<div class="inp" style="left:184.7px;top:415.7px;width:82.4px;height:16.1px;border-color:#c8c8c8"></div>
<div class="t" style="left:188px;top:419.8px;font-size:6.8px">总数：0</div>
</body>
</html>
